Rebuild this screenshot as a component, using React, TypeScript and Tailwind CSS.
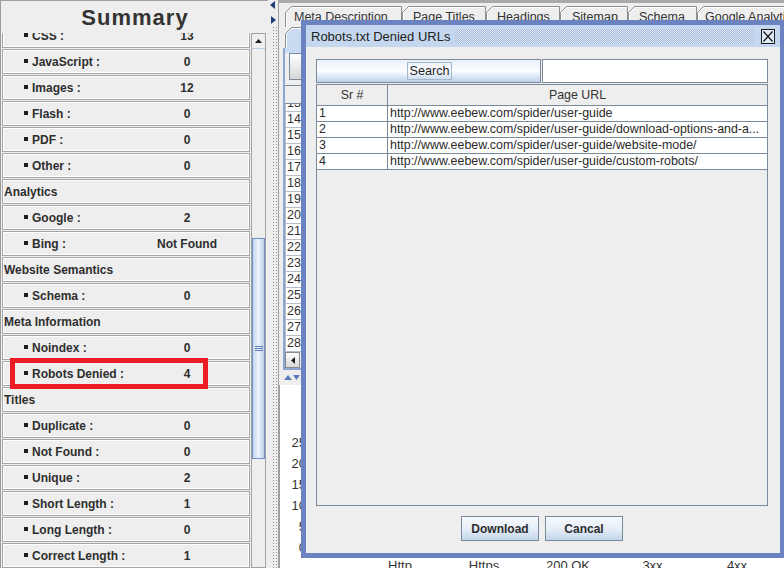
import React from 'react';

type Item = { t: 'i' | 'c'; l: string; v?: string };

const items: Item[] = [
  { t: 'i', l: 'CSS :', v: '13' },
  { t: 'i', l: 'JavaScript :', v: '0' },
  { t: 'i', l: 'Images :', v: '12' },
  { t: 'i', l: 'Flash :', v: '0' },
  { t: 'i', l: 'PDF :', v: '0' },
  { t: 'i', l: 'Other :', v: '0' },
  { t: 'c', l: 'Analytics' },
  { t: 'i', l: 'Google :', v: '2' },
  { t: 'i', l: 'Bing :', v: 'Not Found' },
  { t: 'c', l: 'Website Semantics' },
  { t: 'i', l: 'Schema :', v: '0' },
  { t: 'c', l: 'Meta Information' },
  { t: 'i', l: 'Noindex :', v: '0' },
  { t: 'i', l: 'Robots Denied :', v: '4' },
  { t: 'c', l: 'Titles' },
  { t: 'i', l: 'Duplicate :', v: '0' },
  { t: 'i', l: 'Not Found :', v: '0' },
  { t: 'i', l: 'Unique :', v: '2' },
  { t: 'i', l: 'Short Length :', v: '1' },
  { t: 'i', l: 'Long Length :', v: '0' },
  { t: 'i', l: 'Correct Length :', v: '1' },
];

const urls = [
  ['1', 'http://www.eebew.com/spider/user-guide'],
  ['2', 'http://www.eebew.com/spider/user-guide/download-options-and-a...'],
  ['3', 'http://www.eebew.com/spider/user-guide/website-mode/'],
  ['4', 'http://www.eebew.com/spider/user-guide/custom-robots/'],
];

function SummaryRow({ it }: { it: Item }) {
  return (
    <div className="h-[25px] mb-[1px] w-[248px] shrink-0 border border-[#a6a6a6] shadow-[inset_1px_1px_0_#ffffff,inset_-1px_-1px_0_#ffffff] flex items-center text-[12px] leading-[14px] font-bold text-[#2e2e2e]">
      {it.t === 'c' ? (
        <span className="pl-[1px]">{it.l}</span>
      ) : (
        <>
          <div className="w-[134px] pl-[21px] flex items-center">
            <span className="w-[4px] h-[4px] bg-[#1e1e1e] mr-[4px] mb-[1px] shrink-0" />
            <span className="whitespace-nowrap">{it.l}</span>
          </div>
          <div className="w-[100px] text-center whitespace-nowrap">{it.v}</div>
        </>
      )}
    </div>
  );
}

function Tab({ w, cls, label, sel, pl }: { w: number; cls: string; label?: string; sel?: boolean; pl?: string }) {
  return (
    <div className={`relative h-[21px] shrink-0 ${cls}`}>
      <svg className="absolute inset-0" width={w} height={21}>
        <path d={`M0.5 21 V6.5 L6.5 0.5 H${w - 0.5} V21`} fill={sel ? '#c9dbf0' : '#eeeeee'} stroke="#8e8e8e" />
        <path d={`M1.5 21 V7 L7 1.5 H${w - 1.5}`} fill="none" stroke="#ffffff" />
      </svg>
      {label ? (
        <span className={`relative block ${pl ?? 'pl-[10px]'} pt-[4px] text-[12.5px] leading-[15px] text-[#333] whitespace-nowrap`}>{label}</span>
      ) : null}
    </div>
  );
}

function LeftPanel() {
  return (
    <div className="w-[268px] h-full flex flex-col border-l border-[#9c9c9c] shrink-0">
      <div className="h-[33px] shrink-0 border-t border-[#a0a0a0] flex items-center justify-center pt-[1px] text-[22px] font-bold tracking-[1px] text-[#333] pl-[1px]">
        Summary
      </div>
      <div className="flex-1 flex min-h-0">
        <div className="w-[250px] pl-[1px] overflow-hidden flex flex-col">
          <div className="mt-[-10px] flex flex-col">
            {items.map((it, i) => (
              <SummaryRow key={i} it={it} />
            ))}
          </div>
        </div>
        <div className="w-[15px] h-full border border-[#a3a3a3] bg-[#eeeeee] flex flex-col shrink-0">
          <div className="h-[15px] shrink-0 border-b border-[#b8cfe5] flex items-center justify-center">
            <svg width="7" height="4">
              <path d="M0 4 L3.5 0 L7 4Z" fill="#1e1e1e" />
            </svg>
          </div>
          <div className="mt-[189px] h-[221px] shrink-0 border border-[#6f8fc6] bg-linear-to-r from-[#c3d7ef] via-[#edf3fa] to-[#bcd1e9] flex flex-col items-center justify-center gap-[1px]">
            <div className="w-[8px] h-[1px] bg-[#5d7fbd]" />
            <div className="w-[8px] h-[1px] bg-[#5d7fbd]" />
            <div className="w-[8px] h-[1px] bg-[#5d7fbd]" />
          </div>
        </div>
      </div>
    </div>
  );
}

function Splitter() {
  return (
    <div className="w-[10px] h-full shrink-0 flex flex-col">
      <svg width="10" height="26" className="shrink-0">
        <path d="M2 5 L7 1 L7 9Z" fill="#1f3e78" />
        <path d="M3 16 L8 20 L3 24Z" fill="#1f3e78" />
      </svg>
      <div className="flex-1 w-[5px] ml-[4px] [background-image:radial-gradient(#8e8e8e_0.7px,transparent_0.9px)] [background-size:3px_3px]" />
    </div>
  );
}

function RightPanel() {
  const rowNums = Array.from({ length: 17 }, (_, i) => String(13 + i));
  return (
    <div className="w-[506px] h-full shrink-0 flex flex-col border-l border-l-[#9f9f9f] border-t-[3px] border-t-[#a9a9a9] pl-[6px]">
      <div className="mt-[3px] h-[21px] flex shrink-0 overflow-hidden">
        <Tab w={117} cls="w-[117px]" label="Meta Description" pl="pl-[9px]" />
        <Tab w={84} cls="w-[84px]" label="Page Titles" pl="pl-[11px]" />
        <Tab w={74} cls="w-[74px]" label="Headings" pl="pl-[11px]" />
        <Tab w={68} cls="w-[68px]" label="Sitemap" pl="pl-[12px]" />
        <Tab w={69} cls="w-[69px]" label="Schema" pl="pl-[11px]" />
        <Tab w={110} cls="w-[110px]" label="Google Analytics" pl="pl-[8px]" />
      </div>
      <div className="h-[21px] flex shrink-0">
        <Tab w={130} cls="w-[130px]" sel />
      </div>
      <div className="ml-[-2px] h-[322px] shrink-0 flex flex-col border-l-2 border-[#8ea5d0]">
        <div className="h-[5px] shrink-0 bg-[#c9dbf0]" />
        <div className="h-[27px] shrink-0 pl-[4px]">
          <div className="w-[120px] h-[27px] border border-[#7a8a99] bg-linear-to-b from-[#ffffff] to-[#d6d6d6]" />
        </div>
        <div className="h-[5px] shrink-0" />
        <div className="flex-1 flex flex-col border-t border-[#7a8a99] border-b-2 border-b-[#8ea5d0] min-h-0">
          <div className="h-[18px] shrink-0 bg-[#eeeeee] border-b border-[#7a8a99]" />
          <div className="flex-1 overflow-hidden min-h-0">
            <div className="mt-[-8px] flex flex-col">
              {rowNums.map((n) => (
                <div key={n} className="h-[16px] w-[200px] shrink-0 bg-white border-b border-l border-[#b4bfcc] pl-[1px] text-[12.5px] leading-[15px] text-[#333]">
                  {n}
                </div>
              ))}
            </div>
          </div>
          <div className="h-[16px] shrink-0 flex">
            <div className="w-[15px] h-[16px] border border-[#8a8a8a] bg-linear-to-b from-[#ffffff] to-[#d8d8d8] flex items-center justify-center">
              <svg width="4" height="7">
                <path d="M4 0 L0 3.5 L4 7Z" fill="#1e1e1e" />
              </svg>
            </div>
          </div>
        </div>
      </div>
      <div className="h-[15px] shrink-0 flex items-center ml-[-2px] gap-[2px]">
        <svg width="18" height="7">
          <path d="M1 6 L5 1 L9 6Z" fill="#5b7bbb" />
          <path d="M10 1 L17 1 L13.5 6Z" fill="#5b7bbb" />
        </svg>
        <div className="flex-1 h-[5px] [background-image:radial-gradient(#9a9a9a_0.6px,transparent_0.8px)] [background-size:3px_3px]" />
      </div>
      <div className="flex-1 ml-[-6px] bg-white border-l border-[#a0a0a0] overflow-hidden">
        <svg width="505" height="183" className="block">
          {['25', '20', '15', '10', '5', '0'].map((t, i) => (
            <text key={t} x={26} y={61.5 + i * 21} textAnchor="end" fontSize="13" fill="#333" fontFamily="Liberation Sans, Arial, sans-serif">
              {t}
            </text>
          ))}
          {[
            ['Http', 120],
            ['Https', 204],
            ['200 OK', 288],
            ['3xx', 372.5],
            ['4xx', 457],
          ].map(([t, x]) => (
            <text key={t as string} x={x as number} y={185} textAnchor="middle" fontSize="13" fill="#333" fontFamily="Liberation Sans, Arial, sans-serif">
              {t}
            </text>
          ))}
        </svg>
      </div>
    </div>
  );
}

function Dialog() {
  return (
    <div className="absolute left-[301px] top-[20px] w-[484px] h-[538px] border-[5px] border-[#6b84c1] bg-[#eeeeee] flex flex-col">
      <div className="h-[22px] shrink-0 bg-[#c4d7ee] flex items-center pl-[5px] pr-[5px]">
        <span className="text-[13px] leading-[15px] text-[#222] whitespace-nowrap">Robots.txt Denied URLs</span>
        <div className="flex-1 h-[15px] ml-[5px] mr-[7px] [background-image:repeating-conic-gradient(#a6bbda_0_25%,#dbe6f4_0_50%)] [background-size:2px_2px]" />
        <div className="w-[14px] h-[15px] border border-[#1a1a1a] bg-[#e2eaf5] flex items-center justify-center shrink-0">
          <svg width="10" height="11">
            <path d="M0.5 0.5 L9.5 10.5 M9.5 0.5 L0.5 10.5" stroke="#111" strokeWidth="1.2" />
          </svg>
        </div>
      </div>
      <div className="flex-1 flex flex-col pt-[12px] pl-[10px] pr-[12px]">
        <div className="flex h-[24px] shrink-0">
          <div className="w-[225px] h-full border border-[#7a8a99] bg-linear-to-b from-[#e9f0f8] via-[#fbfdff] to-[#bdd2ea] flex items-center justify-center pl-[2px]">
            <span className="border border-[#a3b8cc] px-[2px] h-[18px] leading-[16px] text-[12.6px] text-[#222]">Search</span>
          </div>
          <div className="flex-1 h-full bg-white border border-[#7a8a99] ml-[1px]" />
        </div>
        <div className="mt-[1px] h-[422px] shrink-0 border border-[#7a8a99] flex flex-col">
          <div className="h-[21px] shrink-0 flex border-b border-[#7a8a99] bg-[#eeeeee] text-[12.4px] leading-[20px] text-[#333]">
            <div className="w-[71px] border-r border-[#7a8a99] text-center">Sr #</div>
            <div className="flex-1 text-center">Page URL</div>
          </div>
          {urls.map(([n, u]) => (
            <div key={n} className="h-[16px] shrink-0 flex border-b border-[#7a8a99] bg-white text-[12.4px] leading-[15px] text-[#2a2a2a]">
              <div className="w-[71px] border-r border-[#7a8a99] pl-[2px]">{n}</div>
              <div className="flex-1 pl-[2px] whitespace-nowrap overflow-hidden">{u}</div>
            </div>
          ))}
        </div>
        <div className="mt-[10px] flex justify-center gap-[6px]">
          {['Download', 'Cancal'].map((b) => (
            <div key={b} className="w-[78px] h-[25px] border border-[#7a8a99] bg-linear-to-b from-[#f7fafd] via-[#e6eef8] to-[#c3d6ec] flex items-center justify-center text-[12px] font-bold text-[#2e2e2e]">
              {b}
            </div>
          ))}
        </div>
      </div>
    </div>
  );
}

export default function App() {
  return (
    <div className="relative w-[784px] h-[568px] overflow-hidden bg-[#eeeeee] flex font-['Liberation_Sans',Arial,sans-serif] text-[#333]">
      <LeftPanel />
      <Splitter />
      <RightPanel />
      <Dialog />
      <div className="absolute left-[10px] top-[358px] w-[198px] h-[31px] border-[5px] border-[#ed1c24]" />
    </div>
  );
}
